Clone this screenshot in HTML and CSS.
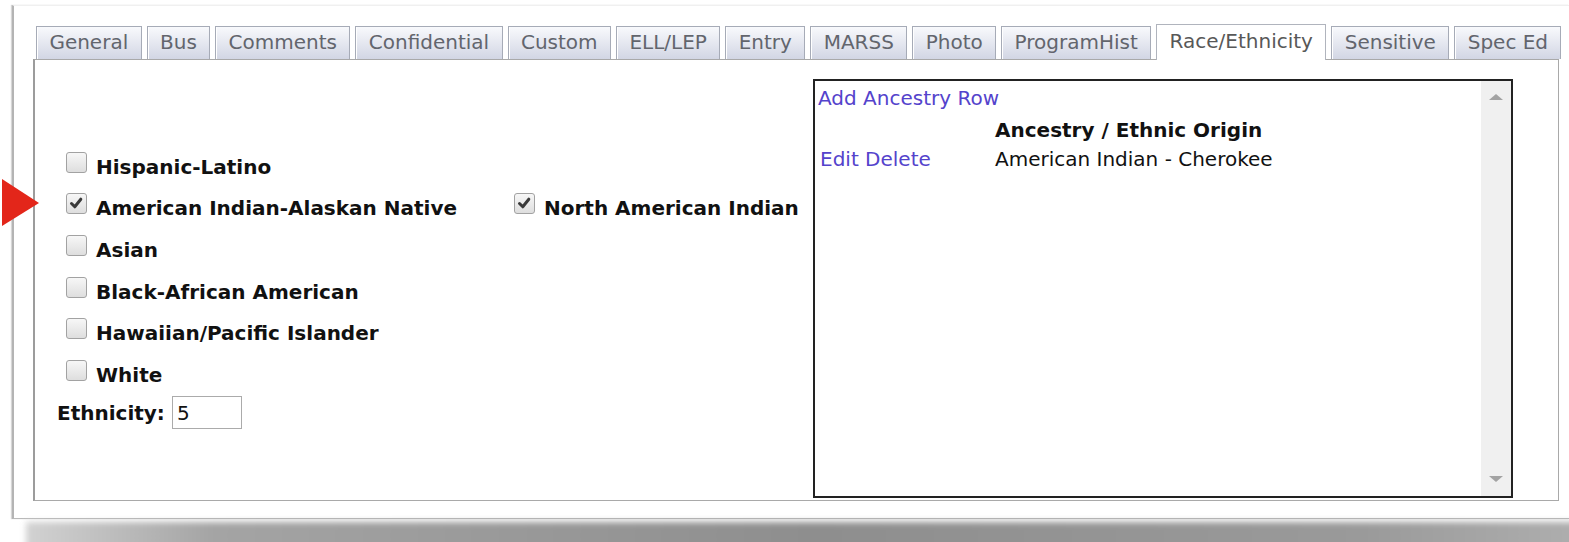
FILE: index.html
```html
<!DOCTYPE html>
<html lang="en">
<head>
<meta charset="utf-8">
<title>Student – Race/Ethnicity</title>
<link rel="stylesheet" href="styles.css">
</head>
<body>
<div class="card">
  <ul class="tabs">
    <li class="tab">General</li>
    <li class="tab">Bus</li>
    <li class="tab">Comments</li>
    <li class="tab">Confidential</li>
    <li class="tab">Custom</li>
    <li class="tab">ELL/LEP</li>
    <li class="tab">Entry</li>
    <li class="tab">MARSS</li>
    <li class="tab">Photo</li>
    <li class="tab">ProgramHist</li>
    <li class="tab tab-active">Race/Ethnicity</li>
    <li class="tab">Sensitive</li>
    <li class="tab">Spec Ed</li>
  </ul>
  <div class="panel">
    <div class="races">
      <div class="race-grid">
        <label class="race"><span class="box"></span>Hispanic-Latino</label>
        <span></span>
        <label class="race"><span class="box checked"><svg viewBox="0 0 21 21" width="21" height="21"><path d="M5.5 10.5 L8.8 13.8 L14.8 6.2" fill="none" stroke="#3a3a3a" stroke-width="3" stroke-linecap="round" stroke-linejoin="round"/></svg></span>American Indian-Alaskan Native</label>
        <label class="race"><span class="box checked"><svg viewBox="0 0 21 21" width="21" height="21"><path d="M5.5 10.5 L8.8 13.8 L14.8 6.2" fill="none" stroke="#3a3a3a" stroke-width="3" stroke-linecap="round" stroke-linejoin="round"/></svg></span>North American Indian</label>
        <label class="race"><span class="box"></span>Asian</label>
        <span></span>
        <label class="race"><span class="box"></span>Black-African American</label>
        <span></span>
        <label class="race"><span class="box"></span>Hawaiian/Pacific Islander</label>
        <span></span>
        <label class="race"><span class="box"></span>White</label>
        <span></span>
      </div>
      <div class="ethnicity">
        <span class="eth-label">Ethnicity:</span>
        <input class="eth-input" type="text" value="5">
      </div>
    </div>
    <div class="ancestry">
      <div class="ancestry-body">
        <a class="link add-row">Add Ancestry Row</a>
        <div class="ancestry-table">
          <span></span>
          <span class="th">Ancestry / Ethnic Origin</span>
          <span class="actions"><a class="link">Edit</a> <a class="link">Delete</a></span>
          <span>American Indian - Cherokee</span>
        </div>
      </div>
      <div class="scrollbar">
        <span class="arrow-up"></span>
        <span class="arrow-down"></span>
      </div>
    </div>
  </div>
  <svg class="pointer" width="40" height="50" viewBox="0 0 40 50"><polygon points="0,0 37,24 0,47" fill="#e3261a"/></svg>
</div>
<div class="shadow"></div>
</body>
</html>
```

FILE: styles.css
```css
html {
  background: #fff;
  overflow: hidden;
}

body {
  margin: 0;
  padding: 0;
  font-family: "DejaVu Sans", Verdana, sans-serif;
  font-size: 20px;
  color: #111;
}

/* outer window frame */
.card {
  position: relative;
  margin: 5px 0 0 12px;
  padding: 18px 10px 17px 19px;
  background: #fff;
  border-top: 1px solid #f0f0f0;
  border-left: 2px solid #b4b4b4;
  border-bottom: 1px solid #b9b9b9;
  box-shadow: -1px 0 1px #d6d6d6;
}

/* soft drop shadow under the frame */
.shadow {
  height: 30px;
  margin: 3px -30px 0 26px;
  background: linear-gradient(to right, #d2d2d2 0%, #a4a4a4 12%, #8e8e8e 50%, #9a9a9a 85%, #b0b0b0 100%);
  filter: blur(3px);
}

.pointer {
  position: absolute;
  left: -12px;
  top: 173px;
}

/* tab strip */
.tabs {
  list-style: none;
  margin: 0;
  padding: 0 0 0 3px;
  display: flex;
  align-items: flex-end;
  gap: 5px;
  position: relative;
  z-index: 1;
}

.tab {
  height: 32px;
  line-height: 30px;
  padding: 0 12.4px;
  border: 1px solid #a6abb7;
  border-bottom: none;
  background: linear-gradient(#f8f9fc, #d2d6e4);
  box-shadow: inset 1px 0 0 #ffffff;
  color: #62656d;
  white-space: nowrap;
}

.tab-active {
  height: 35px;
  line-height: 32px;
  margin-bottom: -1px;
  background: #fff;
  border-color: #b0b4bd;
  color: #585858;
}

/* tab content */
.panel {
  display: flex;
  padding: 19px 45px 2px 24px;
  border: 1px solid #a9a9a9;
  border-left: 2px solid #9c9c9c;
}

.races {
  flex: 1;
  padding-top: 67px;
}

.race-grid {
  display: grid;
  grid-template-columns: 448px auto;
  grid-auto-rows: 41.6px;
  margin-left: 7px;
}

.race {
  display: flex;
  align-items: center;
  font-weight: bold;
  white-space: nowrap;
}

.box {
  width: 21px;
  height: 21px;
  box-sizing: border-box;
  margin: 0 9px 9px 0;
  border: 1px solid #a2a2a2;
  border-radius: 3px;
  background: linear-gradient(#f7f7f7, #dedede);
  flex: none;
  display: flex;
  align-items: center;
  justify-content: center;
}

.box svg {
  display: block;
  margin: -1px;
}

.ethnicity {
  display: flex;
  align-items: center;
  height: 34px;
  margin-top: 0.4px;
}

.eth-label {
  font-weight: bold;
  margin-left: -2px;
}

.eth-input {
  width: 70px;
  height: 33px;
  box-sizing: border-box;
  margin: 0 0 0 7px;
  padding: 0 4px;
  border: 1px solid #ababab;
  font: 20px "DejaVu Sans", Verdana, sans-serif;
  color: #111;
  outline: none;
}

/* ancestry list with its scrollbar */
.ancestry {
  width: 700px;
  height: 419px;
  box-sizing: border-box;
  border: 2px solid #222;
  display: flex;
}

.ancestry-body {
  flex: 1;
  padding: 5px 3px;
}

.link {
  color: #5443cc;
  cursor: pointer;
}

.add-row {
  display: block;
  line-height: 24px;
}

.ancestry-table {
  display: grid;
  grid-template-columns: 175px auto;
  grid-template-rows: 24px 24px;
  row-gap: 5px;
  margin-top: 8px;
  padding-left: 2px;
  line-height: 24px;
}

.th {
  font-weight: bold;
}

.scrollbar {
  width: 30px;
  background: #f0f0f0;
  display: flex;
  flex-direction: column;
  justify-content: space-between;
  align-items: center;
  padding: 13px 0 14px;
  box-sizing: border-box;
}

.arrow-up {
  width: 0;
  height: 0;
  border-left: 7px solid transparent;
  border-right: 7px solid transparent;
  border-bottom: 6px solid #a3a3a3;
}

.arrow-down {
  width: 0;
  height: 0;
  border-left: 7px solid transparent;
  border-right: 7px solid transparent;
  border-top: 6px solid #a3a3a3;
}
```
